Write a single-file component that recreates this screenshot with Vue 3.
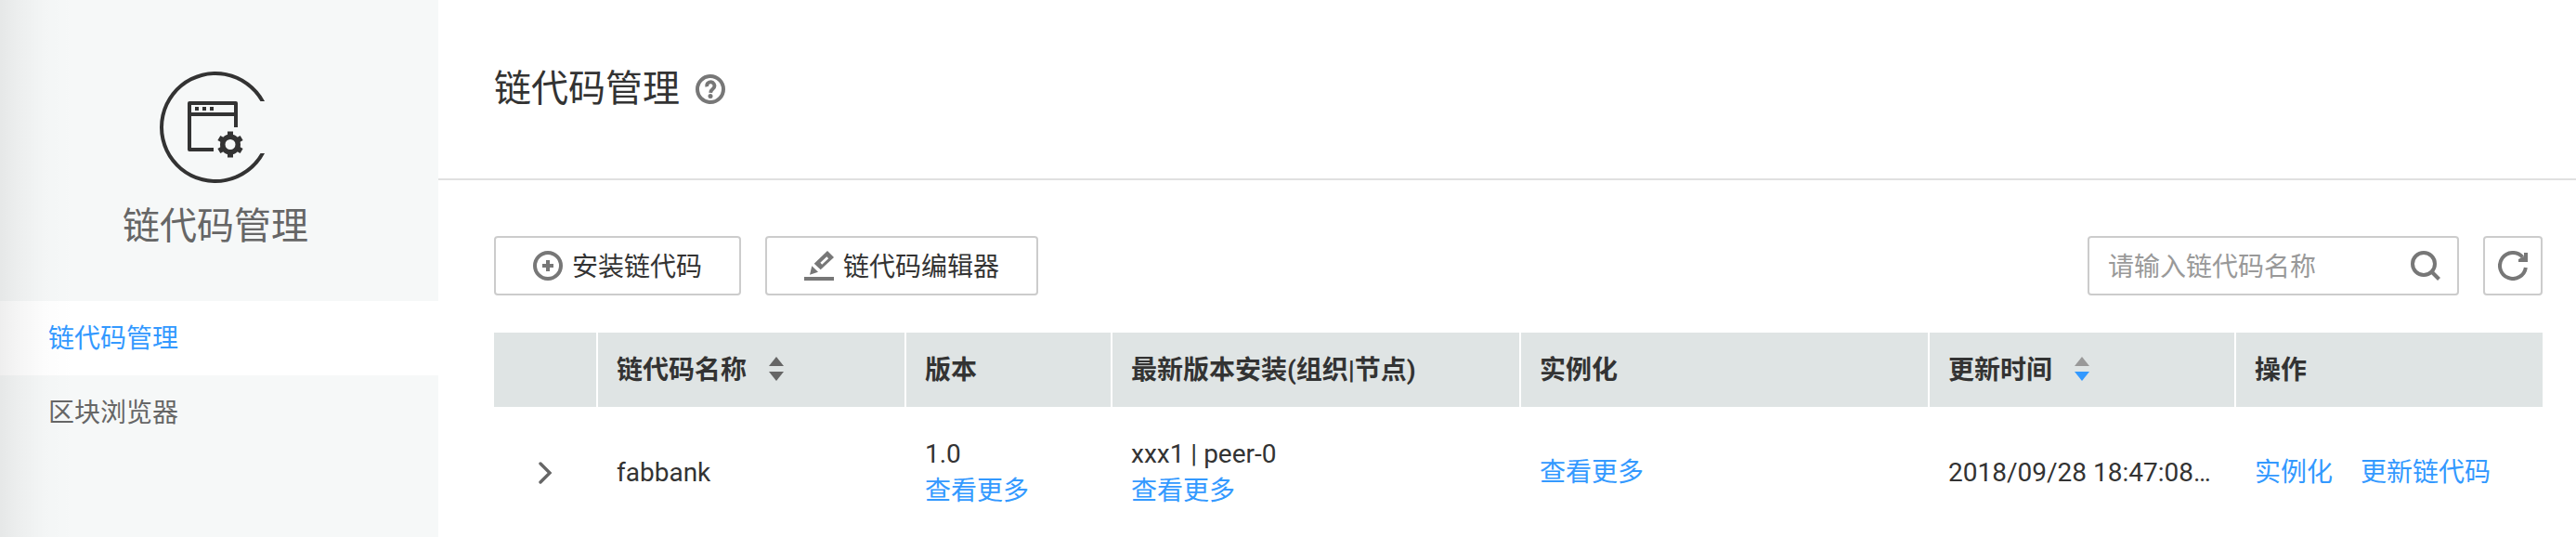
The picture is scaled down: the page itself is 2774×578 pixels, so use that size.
<script setup>
import { ref } from 'vue'

const keyword = ref('')

const navItems = [
  { label: '链代码管理', active: true },
  { label: '区块浏览器', active: false }
]

const columns = [
  { key: 'expand', title: '' },
  { key: 'name', title: '链代码名称', sort: 'none' },
  { key: 'version', title: '版本' },
  { key: 'install', title: '最新版本安装(组织|节点)' },
  { key: 'instance', title: '实例化' },
  { key: 'time', title: '更新时间', sort: 'desc' },
  { key: 'action', title: '操作' }
]

const rows = [
  { name: 'fabbank', version: '1.0', install: 'xxx1 | peer-0', time: '2018/09/28 18:47:08…' }
]
</script>

<template>
  <div class="page">
    <aside class="sidebar">
      <div class="service">
        <svg class="service-icon" viewBox="0 0 120 120" aria-hidden="true">
          <path d="M113.07 32A60 60 0 1 0 113.07 88H108.5A56 56 0 1 1 108.5 32Z" fill="#333" />
          <path d="M58 84H32V34H82V60M32 46H82" fill="none" stroke="#333" stroke-width="4" stroke-linejoin="round" />
          <path d="M38 38h4v4h-4zM46 38h4v4h-4zM54 38h4v4h-4z" fill="#333" />
          <g transform="translate(76 78.5)">
            <circle r="8.25" fill="none" stroke="#333" stroke-width="5.5" />
            <path
              v-for="n in 6"
              :key="n"
              d="M-3 -14H3V-9H-3Z"
              fill="#333"
              :transform="`rotate(${n * 60})`"
            />
          </g>
        </svg>
        <div class="service-name">链代码管理</div>
      </div>
      <nav>
        <a
          v-for="item in navItems"
          :key="item.label"
          href="#"
          class="nav-item"
          :class="{ active: item.active }"
        >{{ item.label }}</a>
      </nav>
    </aside>

    <main class="main">
      <header class="header">
        <h1>链代码管理</h1>
        <button class="help" type="button" aria-label="帮助">
          <svg class="icon" viewBox="0 0 32 32">
            <circle cx="16" cy="16" r="14" fill="none" stroke="currentColor" stroke-width="4" />
            <path d="M12.4 13.2A4 4 0 1 1 18.8 15.4C17 16.8 16.3 17.4 16.2 19.8" fill="none" stroke="currentColor" stroke-width="3.8" />
            <circle cx="16" cy="23.4" r="2.5" fill="currentColor" />
          </svg>
        </button>
      </header>

      <section class="content">
        <div class="toolbar">
          <button class="btn" type="button">
            <svg class="icon" viewBox="0 0 32 32" aria-hidden="true">
              <circle cx="16" cy="16" r="14" fill="none" stroke="currentColor" stroke-width="4" />
              <path d="M10 16H22M16 10V22" stroke="currentColor" stroke-width="4" />
            </svg>
            <span>安装链代码</span>
          </button>
          <button class="btn" type="button">
            <svg class="icon" viewBox="0 0 32 32" aria-hidden="true">
              <path d="M0 28H32V32H0Z" fill="currentColor" />
              <path d="M8.3 16.3L15 22.7L6 25.7Z" fill="currentColor" />
              <path d="M10.7 13.7L25 0L32 7L17.7 20.3Z" fill="currentColor" />
              <path d="M18.3 13.7L25.2 7.2" stroke="#fff" stroke-width="2.6" />
            </svg>
            <span>链代码编辑器</span>
          </button>

          <div class="search">
            <input v-model="keyword" type="text" placeholder="请输入链代码名称" aria-label="请输入链代码名称" />
            <button class="plain" type="button" aria-label="搜索">
              <svg class="icon" viewBox="0 0 32 32">
                <circle cx="14" cy="14" r="12" fill="none" stroke="currentColor" stroke-width="4" />
                <path d="M22.5 22.5L30.5 30.5" stroke="currentColor" stroke-width="4" />
              </svg>
            </button>
          </div>
          <button class="btn square" type="button" aria-label="刷新">
            <svg class="icon" viewBox="0 0 32 32">
              <path d="M29.86 18A14 14 0 1 1 26.5 6.7" fill="none" stroke="currentColor" stroke-width="4" />
              <path d="M28 2H32V12H22V9L28 6Z" fill="currentColor" />
            </svg>
          </button>
        </div>

        <table>
          <colgroup>
            <col v-for="c in columns" :key="c.key" :class="`col-${c.key}`" />
          </colgroup>
          <thead>
            <tr>
              <th v-for="c in columns" :key="c.key" scope="col">
                <span class="head">
                  {{ c.title }}
                  <button v-if="c.sort" class="sort-btn" type="button" :aria-label="`${c.title}排序`">
                    <svg class="sort" :class="c.sort" viewBox="0 0 16 26">
                      <path class="up" d="M8 0L16 10H0Z" />
                      <path class="down" d="M0 16H16L8 26Z" />
                    </svg>
                  </button>
                </span>
              </th>
            </tr>
          </thead>
          <tbody>
            <tr v-for="row in rows" :key="row.name">
              <td class="expand">
                <button class="plain" type="button" aria-label="展开">
                  <svg class="chevron" viewBox="0 0 16 24">
                    <path d="M2 2L12 12L2 22" fill="none" stroke="#666" stroke-width="3.4" stroke-linecap="round" />
                  </svg>
                </button>
              </td>
              <td>{{ row.name }}</td>
              <td>{{ row.version }}<br /><a href="#">查看更多</a></td>
              <td>{{ row.install }}<br /><a href="#">查看更多</a></td>
              <td><a href="#">查看更多</a></td>
              <td>{{ row.time }}</td>
              <td>
                <div class="actions">
                  <a href="#">实例化</a>
                  <a href="#">更新链代码</a>
                </div>
              </td>
            </tr>
          </tbody>
        </table>
      </section>
    </main>
  </div>
</template>

<style>
body {
  margin: 0;
  background: #fff;
}
</style>

<style scoped>
.page {
  display: flex;
  min-height: 100vh;
  font-family: Roboto, "Noto Sans CJK SC", sans-serif;
  font-size: 28px;
  line-height: 40px;
  color: #333;
}

a {
  color: #3399ff;
  text-decoration: none;
}

button,
input {
  font: inherit;
  color: inherit;
  margin: 0;
  padding: 0;
  border: 0;
  background: none;
}

svg {
  display: block;
}

.icon {
  width: 32px;
  height: 32px;
  flex: none;
  color: #777;
}

.sidebar {
  position: relative;
  flex: none;
  width: 472px;
  background: #f6f8f8;
}

/* soft shadow cast on the left edge of the sidebar */
.sidebar::after {
  content: "";
  position: absolute;
  inset: 0 auto 0 0;
  width: 80px;
  background: linear-gradient(
    to right,
    rgba(0, 0, 0, 0.065),
    rgba(0, 0, 0, 0.04) 25%,
    rgba(0, 0, 0, 0.012) 60%,
    rgba(0, 0, 0, 0)
  );
  pointer-events: none;
}

.service {
  display: flex;
  flex-direction: column;
  align-items: center;
  gap: 17px;
  padding: 77px 8px 50px 0;
}

.service-icon {
  width: 120px;
  height: 120px;
}

.service-name {
  font-size: 40px;
  line-height: 60px;
  color: #666;
}

.nav-item {
  display: block;
  padding: 21px 52px 19px;
  color: #666;
}

.nav-item.active {
  background: #fff;
  color: #3399ff;
}

.main {
  flex: 1;
  min-width: 0;
}

.header {
  display: flex;
  align-items: center;
  gap: 17px;
  padding: 64px 60px;
  border-bottom: 2px solid #e0e0e0;
}

h1 {
  margin: 0;
  font-size: 40px;
  font-weight: 400;
  line-height: 64px;
}

.content {
  padding: 60px 36px 0 60px;
}

.toolbar {
  display: flex;
  gap: 26px;
  margin-bottom: 40px;
}

.btn {
  box-sizing: border-box;
  display: flex;
  align-items: center;
  justify-content: center;
  gap: 10px;
  height: 64px;
  padding: 0 40px;
  border: 2px solid #ccc;
  border-radius: 4px;
  background: #fff;
  white-space: nowrap;
}

.btn.square {
  width: 64px;
  padding: 0;
}

.search {
  box-sizing: border-box;
  display: flex;
  align-items: center;
  width: 400px;
  height: 64px;
  margin-left: auto;
  padding: 0 18px 0 20px;
  border: 2px solid #ccc;
  border-radius: 4px;
}

.search input {
  flex: 1;
  min-width: 0;
  height: 40px;
  outline: none;
}

.btn span,
.search input {
  padding-top: 4px;
}

.search input::placeholder {
  color: #999;
  opacity: 1;
}

table {
  width: 100%;
  table-layout: fixed;
  border-collapse: separate;
  border-spacing: 0;
}

.col-expand { width: 112px; }
.col-name { width: 332px; }
.col-version { width: 222px; }
.col-install { width: 440px; }
.col-instance { width: 440px; }
.col-time { width: 330px; }
.col-action { width: 330px; }

th,
td {
  padding: 21px 20px 19px;
  text-align: left;
  white-space: nowrap;
}

th {
  background: #dfe4e4;
  border-right: 2px solid #fff;
  font-weight: 700;
}

th:last-child {
  border-right: 0;
}

td {
  padding: 31px 20px 29px;
  vertical-align: middle;
}

.head {
  display: flex;
  align-items: center;
  gap: 24px;
  height: 40px;
}

.sort-btn {
  padding-bottom: 4px;
}

.sort {
  width: 16px;
  height: 26px;
  fill: #666;
}

.sort.desc .up {
  fill: #999;
}

.sort.desc .down {
  fill: #3399ff;
}

.expand .plain {
  display: block;
  margin: 0 auto;
}

.chevron {
  width: 16px;
  height: 24px;
}

.actions {
  display: flex;
  gap: 30px;
}
</style>
